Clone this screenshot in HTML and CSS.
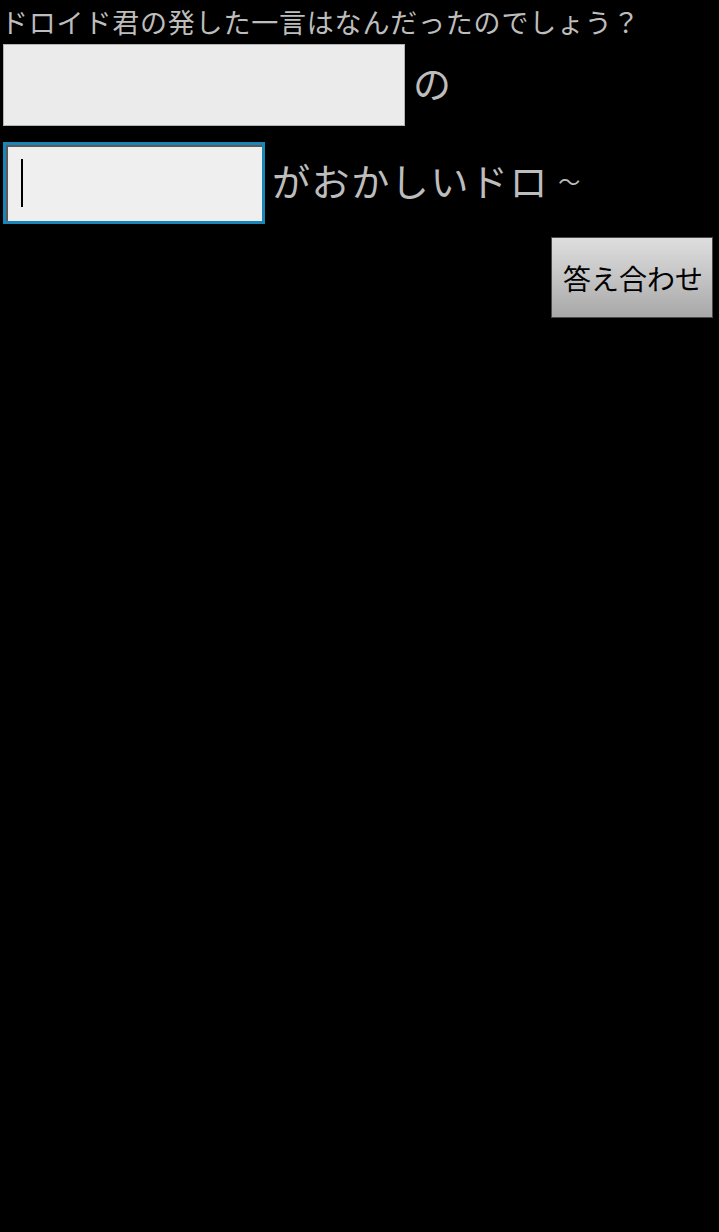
FILE: index.html
```html
<!DOCTYPE html>
<html lang="ja">
<head>
<meta charset="utf-8">
<link rel="stylesheet" href="styles.css">
</head>
<body>
<div class="screen">
  <div class="title">ドロイド君の発した一言はなんだったのでしょう？</div>
  <div class="row row-first">
    <div class="field field-wide"></div>
    <span class="label">の</span>
  </div>
  <div class="row row-second">
    <div class="field field-focus"><span class="caret"></span></div>
    <span class="label">がおかしいドロ<span class="tilde">～</span></span>
  </div>
  <div class="actions">
    <button class="btn" type="button">答え合わせ</button>
  </div>
</div>
</body>
</html>
```

FILE: styles.css
```css
html, body {
  margin: 0;
  padding: 0;
  background: #000;
}
.screen {
  width: 719px;
  min-height: 1232px;
  background: #000;
  font-family: "Noto Sans CJK JP", "Noto Sans", sans-serif;
}
.title {
  color: #bdbdbd;
  font-size: 27px;
  letter-spacing: 0.8px;
  line-height: 44px;
  height: 44px;
  padding-left: 1px;
  white-space: nowrap;
}
.row {
  display: flex;
  align-items: center;
  gap: 8px;
  padding-left: 3px;
}
.row-second {
  margin-top: 16px;
}
.field {
  box-sizing: border-box;
  height: 82px;
  background: #ebebeb;
  border: 1px solid #b4b4b4;
}
.field-wide {
  width: 402px;
}
.field-focus {
  width: 262px;
  background: #efefef;
  border: 3px solid #1a86b8;
  box-shadow: inset 2px 2px 0 #5a5a5a;
  display: flex;
  align-items: center;
  padding-left: 15px;
}
.caret {
  display: block;
  width: 2px;
  height: 48px;
  background: #000;
}
.label {
  color: #bdbdbd;
  font-size: 38px;
  line-height: 1;
  padding-bottom: 6px;
  white-space: nowrap;
}
.row-second .label {
  margin-left: -1px;
  letter-spacing: 1.6px;
}
.tilde {
  display: inline-block;
  font-size: 22px;
  letter-spacing: 0;
  margin-left: 9px;
  vertical-align: 6px;
}
.actions {
  display: flex;
  justify-content: flex-end;
  padding-right: 6px;
  margin-top: 13px;
}
.btn {
  box-sizing: border-box;
  width: 162px;
  height: 81px;
  margin: 0;
  padding: 0 0 0 2px;
  border: 1px solid #4a4a4a;
  border-radius: 0;
  background: linear-gradient(to bottom, #dedede 0%, #c4c4c4 50%, #a8a8a8 100%);
  color: #000;
  font-family: "Noto Sans CJK JP", "Noto Sans", sans-serif;
  font-size: 28px;
  letter-spacing: 0;
}
```
